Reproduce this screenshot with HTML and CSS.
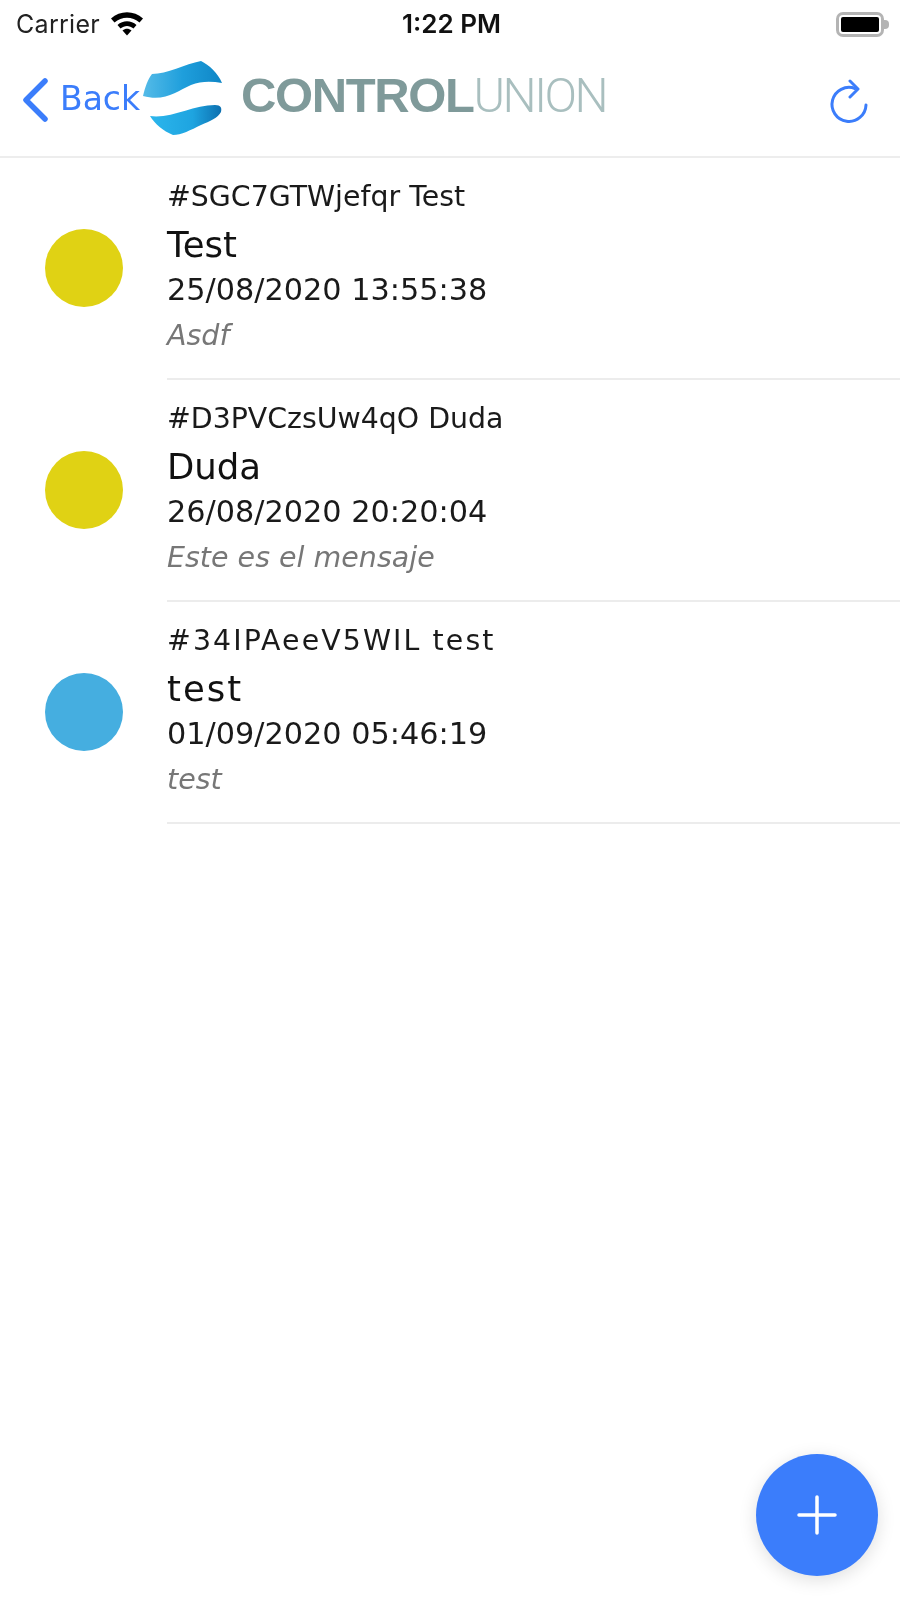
FILE: index.html
```html
<!DOCTYPE html>
<html lang="en">
<head>
    <meta charset="UTF-8">
    <title>Control Union</title>
    <link rel="stylesheet" href="styles.css">
</head>
<body>
    <div class="screen">
        <div class="status-bar">
            <div class="status-left">
                <span class="carrier">Carrier</span>
                <svg class="wifi" width="34" height="26" viewBox="0 0 34 26">
                    <path d="M1 8.5 C10 0 24 0 33 8.5 L29.5 12.5 C22.5 6 11.5 6 4.5 12.5 Z" fill="#000"/>
                    <path d="M7.5 15 C13 10 21 10 26.5 15 L23.5 18.5 C19.5 15 14.5 15 10.5 18.5 Z" fill="#000"/>
                    <path d="M12.5 20.5 C15.5 18 18.5 18 21.5 20.5 L17 25.5 Z" fill="#000"/>
                </svg>
            </div>
            <span class="clock">1:22 PM</span>
            <div class="battery">
                <div class="battery-body"><div class="battery-level"></div></div>
                <div class="battery-tip"></div>
            </div>
        </div>
        <div class="nav-bar">
            <div class="nav-left">
                <svg class="chevron" width="30" height="46" viewBox="0 0 30 46">
                    <path d="M25 4 L6 23 L25 42" fill="none" stroke="#3b7dfb" stroke-width="5.5" stroke-linecap="round" stroke-linejoin="round"/>
                </svg>
                <span class="back">Back</span>
                <div class="logo">
                    <svg class="logo-mark" width="82" height="78" viewBox="0 0 82 78">
                        <defs>
                            <linearGradient id="swoosh-top" x1="0" y1="0" x2="1" y2="0">
                                <stop offset="0" stop-color="#55bbe8"/>
                                <stop offset="0.5" stop-color="#1f9fdc"/>
                                <stop offset="1" stop-color="#0f86c6"/>
                            </linearGradient>
                            <linearGradient id="swoosh-bottom" x1="0" y1="0" x2="1" y2="0">
                                <stop offset="0" stop-color="#2cb6ec"/>
                                <stop offset="0.6" stop-color="#1ea4e0"/>
                                <stop offset="1" stop-color="#0d70b0"/>
                            </linearGradient>
                        </defs>
                        <path d="M0 37 C2 28 5 20 9 15 C24 15 42 5 58 2 C66 6 75 14 79 24 C68 22 58 22 48 26 C34 32 22 43 0 37 Z" fill="url(#swoosh-top)"/>
                        <path d="M7 57 C28 60 50 46 72 46 C78 46 79 49 78 53 C75 59 67 62 58 66 C48 71 38 76 30 76 C20 72 12 65 7 57 Z" fill="url(#swoosh-bottom)"/>
                    </svg>
                    <span class="logo-text"><b>CONTROL</b><span class="logo-light">UNION</span></span>
                </div>
            </div>
            <svg class="refresh" width="42" height="46" viewBox="0 0 42 46">
                <path d="M27 9.5 A17 17 0 1 0 38 26" fill="none" stroke="#3b7dfb" stroke-width="3" stroke-linecap="round"/>
                <path d="M22 2 L30 10 L22 18" fill="none" stroke="#3b7dfb" stroke-width="3" stroke-linecap="round" stroke-linejoin="round"/>
            </svg>
        </div>

        <div class="list">
            <div class="row">
                <div class="dot dot-yellow"></div>
                <div class="row-body">
                    <div class="row-code">#SGC7GTWjefqr Test</div>
                    <div class="row-title">Test</div>
                    <div class="row-date">25/08/2020 13:55:38</div>
                    <div class="row-msg">Asdf</div>
                </div>
            </div>
            <div class="row">
                <div class="dot dot-yellow"></div>
                <div class="row-body">
                    <div class="row-code">#D3PVCzsUw4qO Duda</div>
                    <div class="row-title">Duda</div>
                    <div class="row-date">26/08/2020 20:20:04</div>
                    <div class="row-msg">Este es el mensaje</div>
                </div>
            </div>
            <div class="row row-wide">
                <div class="dot dot-blue"></div>
                <div class="row-body">
                    <div class="row-code">#34IPAeeV5WIL test</div>
                    <div class="row-title">test</div>
                    <div class="row-date">01/09/2020 05:46:19</div>
                    <div class="row-msg">test</div>
                </div>
            </div>
        </div>

        <div class="fab">
            <svg width="40" height="40" viewBox="0 0 40 40">
                <path d="M20 2 V38 M2 20 H38" stroke="#fff" stroke-width="3.5" stroke-linecap="round"/>
            </svg>
        </div>
    </div>
</body>
</html>
```

FILE: styles.css
```css
html, body {
    margin: 0;
    padding: 0;
    height: 100%;
    background: #fff;
}

body {
    font-family: 'DejaVu Sans', sans-serif;
    color: #111;
}

.screen {
    position: relative;
    width: 900px;
    height: 1598px;
    overflow: hidden;
    filter: blur(0.7px);
}

.status-bar {
    height: 48px;
    display: grid;
    grid-template-columns: 1fr auto 1fr;
    align-items: center;
    padding: 0 11px 0 16px;
}

.status-left {
    display: flex;
    align-items: center;
    gap: 10px;
}

.carrier {
    font-family: 'Inter', sans-serif;
    font-size: 25px;
    letter-spacing: 0.3px;
    color: #222;
}

.wifi {
    margin-top: -2px;
}

.clock {
    font-family: 'Inter', sans-serif;
    font-size: 26px;
    font-weight: 600;
    color: #111;
    margin: -2px 0 0 -2px;
}

.battery {
    justify-self: end;
    display: flex;
    align-items: center;
}

.battery-body {
    width: 48px;
    height: 25px;
    box-sizing: border-box;
    border: 3px solid #b4b4b4;
    border-radius: 7px;
    padding: 2px;
}

.battery-level {
    height: 100%;
    background: #000;
    border-radius: 2px;
}

.battery-tip {
    width: 5px;
    height: 9px;
    background: #b4b4b4;
    border-radius: 0 4px 4px 0;
}

.nav-bar {
    height: 110px;
    box-sizing: border-box;
    border-bottom: 2px solid #ededed;
    display: flex;
    align-items: center;
    justify-content: space-between;
    padding: 0 30px 8px 20px;
}

.nav-left {
    display: flex;
    align-items: center;
}

.chevron {
    margin: 3px 8px 0 0;
}

.back {
    font-size: 33px;
    color: #3b7dfb;
    width: 83px;
    margin-left: 2px;
    white-space: nowrap;
}

.logo {
    display: flex;
    align-items: center;
    gap: 16px;
}

.logo-text {
    font-family: 'Liberation Sans', sans-serif;
    font-size: 49px;
    letter-spacing: -1.4px;
    color: #7f9a9a;
    margin-top: -6px;
}

.logo-light {
    font-family: 'Roboto', sans-serif;
    font-weight: 300;
    font-size: 48px;
    color: #a9bfbf;
    letter-spacing: -2.5px;
}

.refresh {
    margin-top: 8px;
}

.row {
    height: 222px;
    display: flex;
    align-items: center;
}

.dot {
    flex-shrink: 0;
    width: 78px;
    height: 78px;
    border-radius: 50%;
    margin: -2px 44px 0 45px;
}

.dot-yellow {
    background: #e0d214;
}

.dot-blue {
    background: #45aee0;
}

.row-body {
    flex: 1;
    height: 100%;
    box-sizing: border-box;
    border-bottom: 2px solid #ececec;
    display: flex;
    flex-direction: column;
    justify-content: center;
    gap: 6px;
    padding-bottom: 1.5px;
}

.row-code {
    font-size: 28.4px;
    line-height: 36px;
    color: #1a1a1a;
}

.row-title {
    font-size: 35.5px;
    line-height: 46px;
    color: #111;
    margin-top: 1.5px;
}

.row-date {
    font-size: 30.3px;
    line-height: 38px;
    color: #1a1a1a;
    margin-top: -3px;
}

.row-msg {
    font-size: 28.5px;
    line-height: 40px;
    font-style: italic;
    color: #777;
    margin-top: 1px;
}

.row-wide .row-code {
    letter-spacing: 2.1px;
}

.row-wide .row-title {
    letter-spacing: 2px;
}

.fab {
    position: absolute;
    left: 756px;
    top: 1454px;
    width: 122px;
    height: 122px;
    border-radius: 50%;
    background: #3b7dfb;
    box-shadow: 0 4px 18px rgba(0, 0, 0, 0.13);
    display: flex;
    align-items: center;
    justify-content: center;
}
```
